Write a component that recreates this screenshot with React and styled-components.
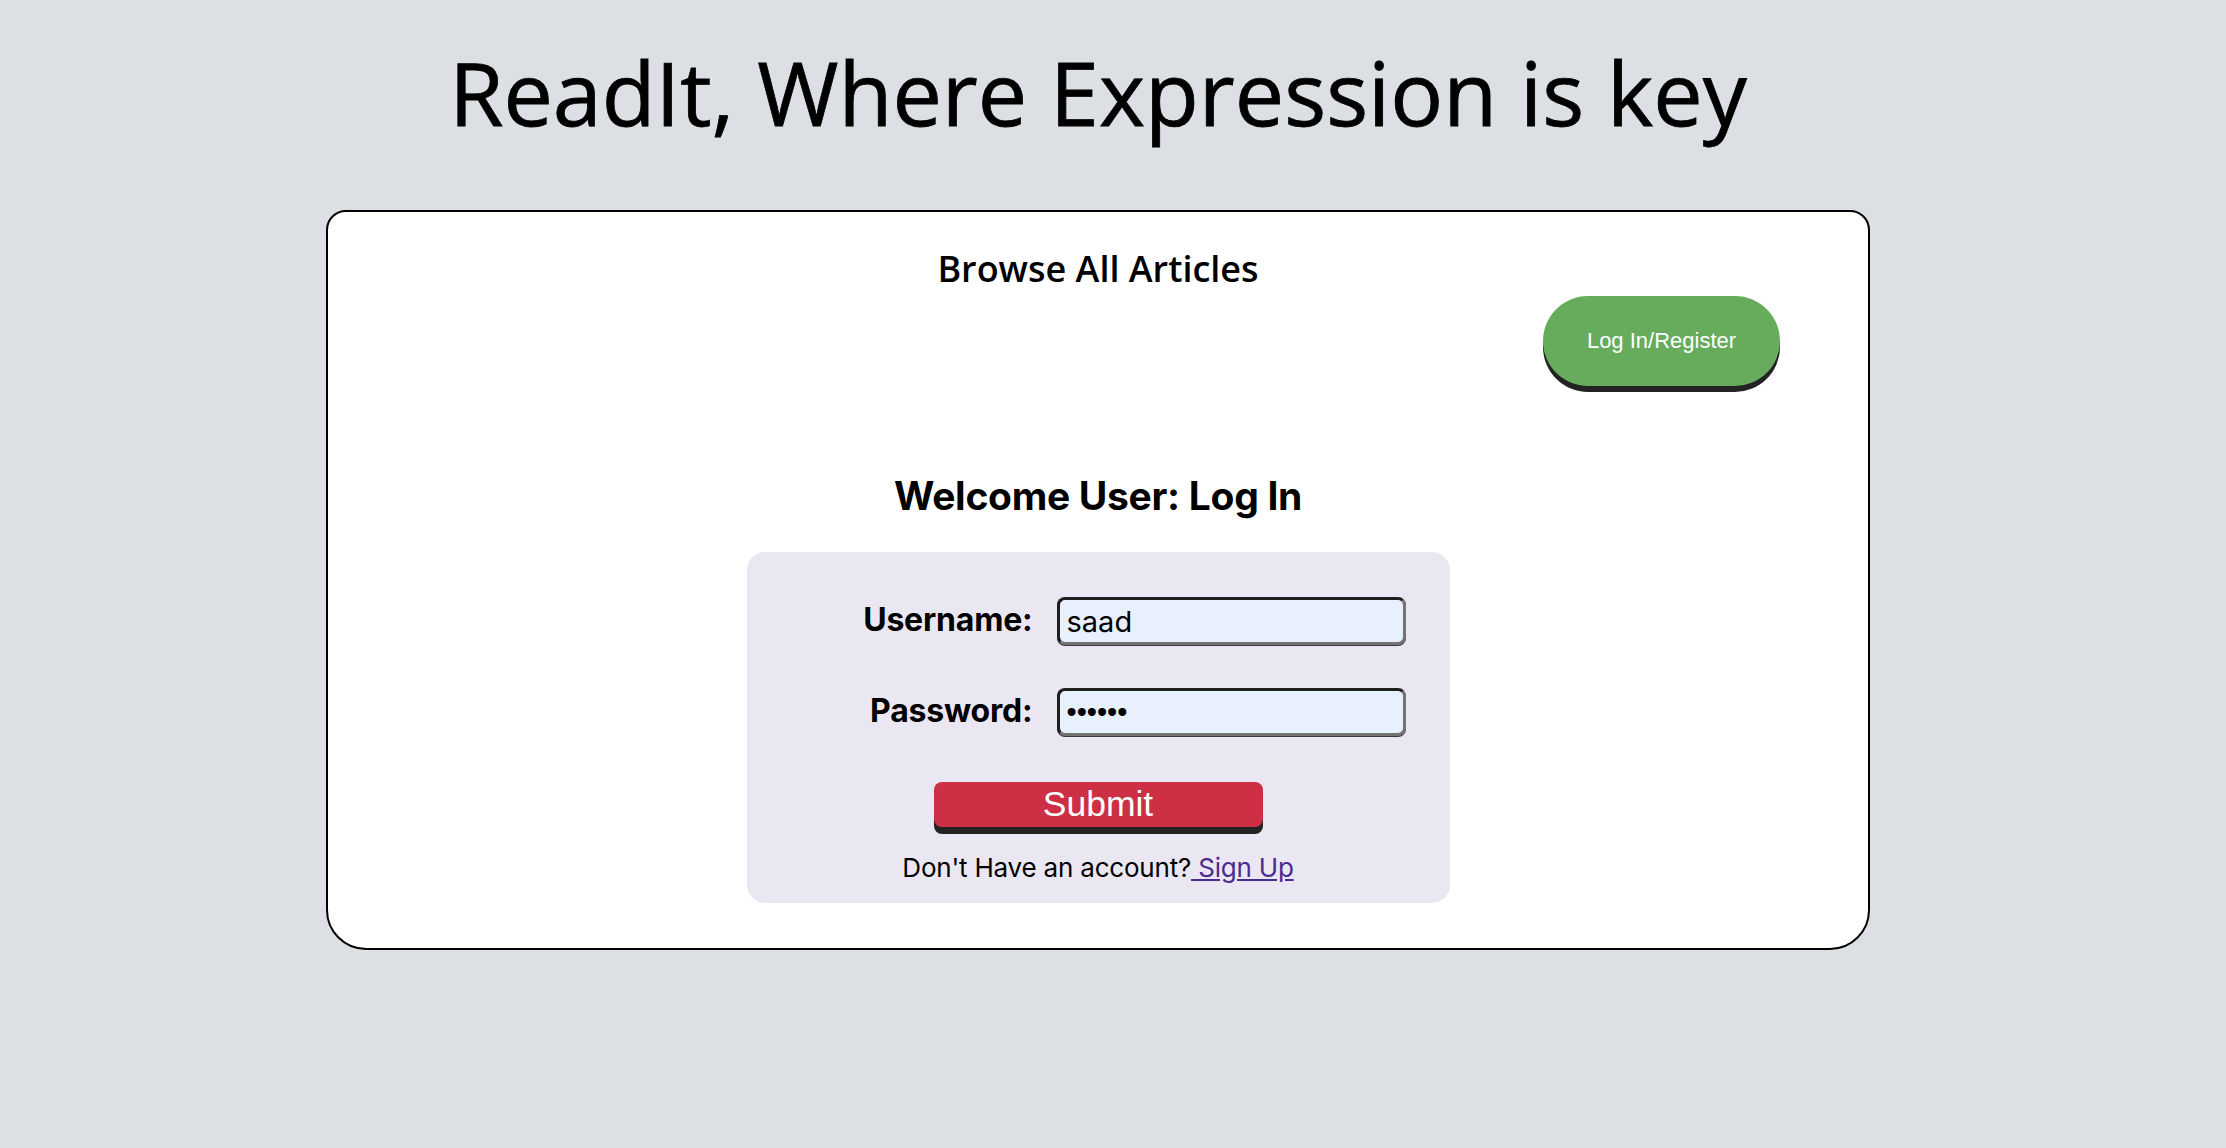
import styled, { createGlobalStyle } from "styled-components";

const GlobalStyle = createGlobalStyle`
  html, body {
    margin: 0;
    padding: 0;
    background-color: #dcdfe3;
  }
  body {
    font-family: "Inter", "Liberation Sans", sans-serif;
    color: black;
  }
`;

const Page = styled.div`
  min-height: 1148px;
  padding-right: 30px;
  display: flex;
  flex-direction: column;
  align-items: center;
`;

const SiteTitle = styled.h1`
  margin: 32px 0 58px 0;
  font-family: "Open Sans", "Noto Sans", sans-serif;
  font-weight: 400;
  font-size: 88px;
  line-height: 120px;
  -webkit-text-stroke: 0.8px black;
`;

const Card = styled.div`
  box-sizing: border-box;
  width: 1544px;
  background-color: white;
  border: solid black 2px;
  border-radius: 20px 20px 40px 40px;
  padding: 32px 88px 45px 88px;
  display: flex;
  flex-direction: column;
  align-items: center;
`;

const BrowseLink = styled.h2`
  margin: 0;
  font-family: "Open Sans", "Noto Sans", sans-serif;
  font-weight: 600;
  font-size: 36px;
  line-height: 49px;
`;

const TopBar = styled.div`
  align-self: stretch;
  display: flex;
  justify-content: flex-end;
  padding-top: 3px;
`;

const PillButton = styled.button`
  width: 237px;
  height: 90px;
  border: none;
  border-radius: 45px;
  background-color: #66ac5c;
  color: white;
  font-family: "Liberation Sans", Arial, sans-serif;
  font-size: 22px;
  box-shadow: 0 6px 0 #232323;
  cursor: pointer;
`;

const Welcome = styled.h2`
  margin: 86px 0 33px 0;
  font-weight: 700;
  font-size: 39px;
  line-height: 47px;
  letter-spacing: -0.3px;
`;

const FormPanel = styled.form`
  box-sizing: border-box;
  width: 703px;
  background-color: #eae7f3;
  border-radius: 18px;
  padding: 45px 0 20px 0;
  display: flex;
  flex-direction: column;
  align-items: center;
`;

const FieldGrid = styled.div`
  display: grid;
  grid-template-columns: 242px 349px;
  column-gap: 24px;
  row-gap: 43px;
  align-items: center;
`;

const Label = styled.label`
  text-align: right;
  font-weight: 700;
  font-size: 32px;
  letter-spacing: -0.2px;
  padding-bottom: 4px;
`;

const TextInput = styled.input`
  box-sizing: border-box;
  width: 349px;
  height: 48px;
  border: 3px solid;
  border-color: #1e1e1e #747474 #747474 #1e1e1e;
  border-radius: 8px;
  background-color: #e8f0fe;
  box-shadow: 0 1px 0 #3a3a3a;
  padding: 0 7px;
  font-family: ${(props) =>
    props.type === "password"
      ? '"Liberation Sans", Arial, sans-serif'
      : '"Inter", "Liberation Sans", sans-serif'};
  font-size: 29px;
  color: black;
  outline: none;
`;

const SubmitButton = styled.button`
  margin-top: 46px;
  width: 329px;
  height: 45px;
  border: none;
  border-radius: 8px;
  background-color: #cd2f44;
  color: white;
  font-family: "Liberation Sans", Arial, sans-serif;
  font-size: 35.5px;
  line-height: 45px;
  padding: 0;
  box-shadow: 0 7px 0 #232323;
  cursor: pointer;
`;

const SignupNote = styled.p`
  margin: 25px 0 0 0;
  font-size: 26px;
  line-height: 31px;
  letter-spacing: -0.2px;

  & > a {
    color: #4b2b8f;
  }
`;

const App = () => {
  return (
    <>
      <GlobalStyle />
      <Page>
        <SiteTitle>ReadIt, Where Expression is key</SiteTitle>
        <Card>
          <BrowseLink>Browse All Articles</BrowseLink>
          <TopBar>
            <PillButton>Log In/Register</PillButton>
          </TopBar>
          <Welcome>Welcome User: Log In</Welcome>
          <FormPanel onSubmit={(e) => e.preventDefault()}>
            <FieldGrid>
              <Label htmlFor="username">Username:</Label>
              <TextInput id="username" type="text" defaultValue="saad" />
              <Label htmlFor="password">Password:</Label>
              <TextInput id="password" type="password" defaultValue="saad12" />
            </FieldGrid>
            <SubmitButton type="submit">Submit</SubmitButton>
            <SignupNote>
              Don't Have an account?<a href="#signup"> Sign Up</a>
            </SignupNote>
          </FormPanel>
        </Card>
      </Page>
    </>
  );
};

export default App;
